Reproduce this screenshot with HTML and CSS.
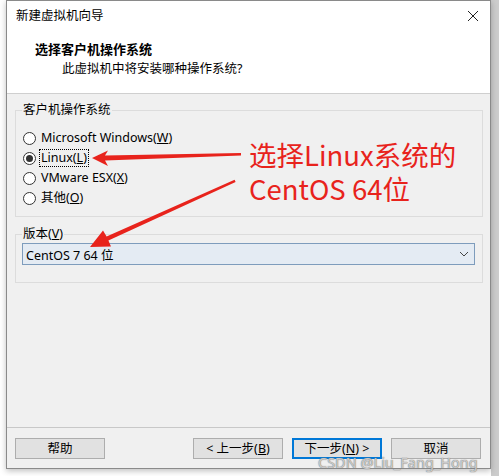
FILE: index.html
```html
<!DOCTYPE html>
<html lang="zh-CN">
<head>
<meta charset="utf-8">
<title>新建虚拟机向导</title>
<link rel="stylesheet" href="styles.css">
</head>
<body>
<div class="window">
  <div class="titlebar">
    <span class="title">新建虚拟机向导</span>
    <svg class="close" width="12" height="12" viewBox="0 0 12 12"><path d="M1 1L11 11M11 1L1 11" stroke="#222" stroke-width="1" fill="none"/></svg>
  </div>
  <div class="header">
    <div class="h-title">选择客户机操作系统</div>
    <div class="h-sub">此虚拟机中将安装哪种操作系统?</div>
  </div>
  <div class="content">
    <fieldset class="group">
      <legend>客户机操作系统</legend>
      <div class="radios">
        <div class="radio"><span class="dot"></span><span class="lbl">Microsoft Windows(<u>W</u>)</span></div>
        <div class="radio checked"><span class="dot"></span><span class="lbl focus">Linux(<u>L</u>)</span></div>
        <div class="radio"><span class="dot"></span><span class="lbl">VMware ESX(<u>X</u>)</span></div>
        <div class="radio"><span class="dot"></span><span class="lbl">其他(<u>O</u>)</span></div>
      </div>
    </fieldset>
    <fieldset class="group version">
      <legend>版本(<u>V</u>)</legend>
      <div class="select">
        <span>CentOS 7 64 位</span>
        <svg width="10" height="6" viewBox="0 0 10 6"><path d="M1 1L5 5L9 1" stroke="#444" stroke-width="1" fill="none"/></svg>
      </div>
    </fieldset>
  </div>
  <div class="footer">
    <button class="btn help">帮助</button>
    <button class="btn">&lt; 上一步(<u>B</u>)</button>
    <button class="btn default">下一步(<u>N</u>) &gt;</button>
    <button class="btn">取消</button>
  </div>
</div>

<div class="note">选择Linux系统的<br>CentOS 64位</div>
<svg class="arrows" width="499" height="476" viewBox="0 0 499 476">
  <polygon fill="#e8231c" points="92,158 108,150.5 105,155.5 241,153 241,155.5 105,160.5 108,166"/>
  <polygon fill="#e8231c" points="90,247 103,230.5 106.6,236.5 234.6,179.8 235.6,182 108.4,240.4 111,246.5"/>
</svg>
<div class="watermark">CSDN @Liu_Fang_Hong</div>
</body>
</html>
```
FILE: styles.css
```css
html, body {
  margin: 0;
  padding: 0;
}
body {
  width: 499px;
  height: 476px;
  position: relative;
  overflow: hidden;
  background: linear-gradient(to right, #ffffff 491px, #cccccc 491px);
  font-family: "Noto Sans", "Noto Sans CJK SC", sans-serif;
  font-size: 12.5px;
  color: #000;
}
.window {
  margin-left: 6px;
  width: 485px;
  height: 469px;
  box-sizing: border-box;
  border: 1px solid #8a8a8a;
  background: #f0f0f0;
  display: flex;
  flex-direction: column;
  box-shadow: 0 2px 6px rgba(0,0,0,0.25);
}
.titlebar {
  height: 30px;
  background: #fff;
  display: flex;
  align-items: center;
  justify-content: space-between;
  padding: 0 11px 0 9px;
}
.title {
  font-size: 12.5px;
  line-height: 18px;
}
.close {
  display: block;
}
.header {
  height: 62px;
  background: #fff;
  border-bottom: 1px solid #cfcfcf;
  display: flex;
  flex-direction: column;
}
.h-title {
  font-weight: bold;
  font-size: 13px;
  padding-left: 28px;
  margin-top: 8px;
  line-height: 20px;
}
.h-sub {
  padding-left: 55px;
  line-height: 20px;
}
.content {
  flex: 1;
  padding: 7px 7px 0 8px;
}
.group {
  margin: 0;
  border: 1px solid #dcdcdc;
  padding: 0 7px 8px 6px;
}
.group legend {
  padding: 0 1px;
  line-height: 18px;
  color: #000;
}
.radios {
  padding-top: 9px;
  display: flex;
  flex-direction: column;
}
.radio {
  height: 20px;
  display: flex;
  align-items: center;
  gap: 4px;
}
.dot {
  width: 13px;
  height: 13px;
  box-sizing: border-box;
  border: 1px solid #333;
  border-radius: 50%;
  background: #fff;
  display: flex;
  align-items: center;
  justify-content: center;
  margin-left: 1px;
}
.checked .dot::after {
  content: "";
  width: 7px;
  height: 7px;
  border-radius: 50%;
  background: #333;
}
.lbl {
  line-height: 16px;
  padding: 0 1px;
}
.focus {
  outline: 1px dotted #000;
}
.version {
  margin-top: 8px;
  padding: 9px 7px 17px 6px;
}
.version legend {
  margin-bottom: -9px;
}
.select {
  height: 22px;
  box-sizing: border-box;
  border: 1px solid #7e9cbc;
  background: #e4ebf3;
  display: flex;
  align-items: center;
  justify-content: space-between;
  padding: 0 5px 0 3px;
}
.footer {
  border-top: 1px solid #c8c8c8;
  padding: 10px 9px 9px 8px;
  display: flex;
  gap: 9px;
}
.btn {
  width: 90px;
  height: 21px;
  box-sizing: border-box;
  border: 1px solid #adadad;
  background: #e1e1e1;
  font-family: inherit;
  font-size: 12.5px;
  line-height: 17px;
  padding: 0;
  color: #000;
}
.help {
  margin-right: auto;
}
.default {
  border-color: #0078d7;
  box-shadow: inset 0 0 0 1px #0078d7;
}
.note {
  position: absolute;
  left: 249px;
  top: 137px;
  color: #e8231c;
  font-family: "Noto Sans CJK SC", sans-serif;
  font-size: 27.5px;
  line-height: 34px;
  white-space: nowrap;
}
.arrows {
  position: absolute;
  left: 0;
  top: 0;
}
.watermark {
  position: absolute;
  left: 318px;
  top: 453px;
  white-space: nowrap;
  font-family: "Noto Sans", sans-serif;
  font-size: 14.5px;
  line-height: 18px;
  color: rgba(255,255,255,0.6);
  text-shadow: 0 0 1px #7a7a7a, 0 0 1px #7a7a7a;
}
```
